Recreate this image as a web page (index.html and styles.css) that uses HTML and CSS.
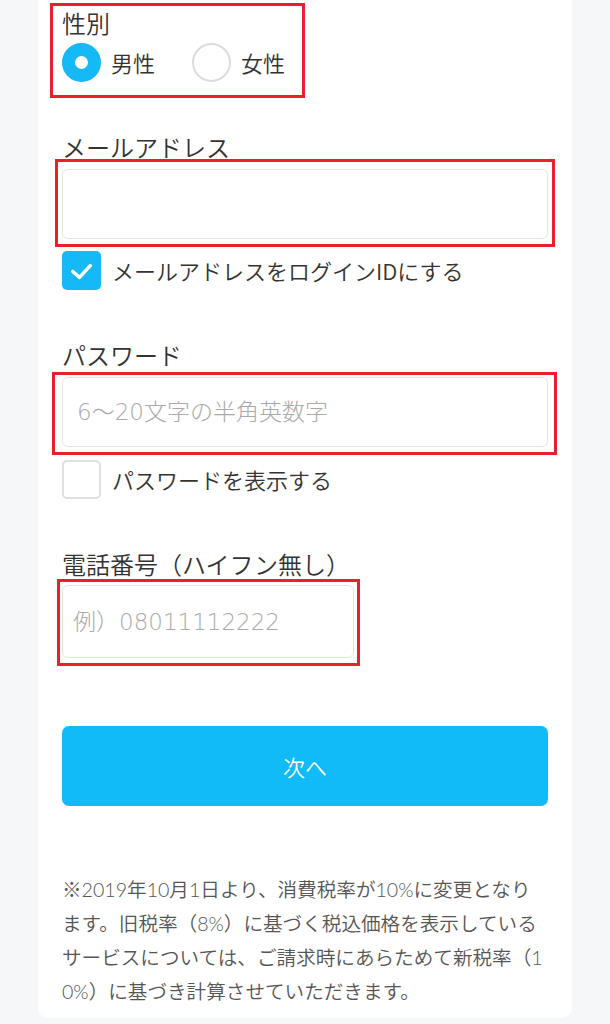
FILE: index.html
```html
<!DOCTYPE html>
<html lang="ja">
<head>
  <meta charset="UTF-8" />
  <meta name="viewport" content="width=device-width, initial-scale=1.0"/>
  <title>会員登録</title>
  <link rel="stylesheet" href="styles.css">
</head>
<body>

  <div class="card">

    <div class="mark mark-gender">
      <div class="label">性別</div>
      <div class="radios">
        <label class="radio-item"><span class="radio checked"></span>男性</label>
        <label class="radio-item"><span class="radio"></span>女性</label>
      </div>
    </div>

    <div class="field field-email">
      <div class="label">メールアドレス</div>
      <div class="mark mark-email">
        <input class="text-input" type="email" />
      </div>
      <label class="check-item"><span class="checkbox checked"><svg viewBox="0 0 40 40" width="39" height="39"><path d="M11 21 L18 27 L29 15" fill="none" stroke="#fff" stroke-width="3.6" stroke-linecap="round" stroke-linejoin="round"/></svg></span>メールアドレスをログインIDにする</label>
    </div>

    <div class="field field-password">
      <div class="label">パスワード</div>
      <div class="mark mark-password">
        <input class="text-input" type="password" placeholder="6〜20文字の半角英数字" />
      </div>
      <label class="check-item check-pass"><span class="checkbox"></span>パスワードを表示する</label>
    </div>

    <div class="field field-tel">
      <div class="label">電話番号（ハイフン無し）</div>
      <div class="mark mark-tel">
        <input class="text-input tel-input" type="tel" placeholder="例）08011112222" />
      </div>
    </div>

    <button class="next-button">次へ</button>

    <p class="note">※2019年10月1日より、消費税率が10%に変更となります。旧税率（8%）に基づく税込価格を表示しているサービスについては、ご請求時にあらためて新税率（10%）に基づき計算させていただきます。</p>

  </div>

</body>
</html>
```

FILE: styles.css
```css
body {
  margin: 0;
  background-color: #f6f7f9;
  color: #333;
  font-family: "Noto Sans CJK JP", "Noto Sans", sans-serif;
  font-weight: 350;
}

.card {
  margin: 0 38px;
  padding: 3px 24px 9px;
  background-color: #fff;
  border-radius: 0 0 10px 10px;
}

.label {
  font-size: 24px;
  line-height: 30px;
}

/* 赤枠（注記） */
.mark {
  border: 3px solid #e8202b;
}

.mark-gender {
  display: inline-block;
  margin-left: -12px;
  padding: 2px 17px 13px 9px;
}

.radios {
  display: flex;
  align-items: center;
  gap: 37px;
  margin-top: 5px;
}

.radio-item {
  display: flex;
  align-items: center;
  gap: 10px;
  font-size: 22px;
  line-height: 39px;
}

.radio {
  box-sizing: border-box;
  width: 39px;
  height: 39px;
  border-radius: 50%;
  border: 2px solid #dcdcdc;
  background-color: #fff;
}

.radio.checked {
  border: 13px solid #14b9f5;
}

.field-email {
  margin-top: 34px;
}

.field-password {
  margin-top: 50px;
}

.field-tel {
  margin-top: 50px;
}

.text-input {
  display: block;
  box-sizing: border-box;
  width: 100%;
  height: 70px;
  margin: 0;
  padding: 0 14px;
  border: 1px solid #e3e3e3;
  border-radius: 6px;
  background-color: #fff;
  font-family: "DejaVu Sans", "Noto Sans CJK JP", sans-serif;
  font-weight: 300;
  font-size: 23px;
  color: #333;
}

.text-input::placeholder {
  color: #aaa;
}

.mark-email {
  margin: -3px -7px 0;
  padding: 7px 4px 5px;
}

.mark-password {
  margin: 2px -9px 0 -10px;
  padding: 2px 6px 5px 7px;
}

.mark-tel {
  margin: 0 0 0 -5px;
  width: 292px;
  padding: 3px 3px 5px 2px;
}

.tel-input {
  height: 73px;
  padding-left: 10px;
}

.check-item {
  display: flex;
  align-items: center;
  gap: 11px;
  margin-top: 4px;
  font-size: 22px;
  line-height: 39px;
}

.check-pass {
  margin-top: 5px;
}

.checkbox {
  box-sizing: border-box;
  display: flex;
  width: 39px;
  height: 39px;
  border: 2px solid #e0e0e0;
  border-radius: 5px;
  background-color: #fff;
}

.checkbox.checked {
  border: none;
  background-color: #14b9f5;
}

.next-button {
  display: block;
  width: 100%;
  height: 80px;
  margin-top: 60px;
  border: none;
  border-radius: 7px;
  background-color: #10bbf7;
  color: #fff;
  font-family: inherit;
  font-weight: 350;
  font-size: 22px;
}

.note {
  margin: 67px 0 0;
  font-family: Lato, "Noto Sans CJK JP", sans-serif;
  font-size: 19.6px;
  line-height: 34px;
  color: #555;
  line-break: anywhere;
}
```
